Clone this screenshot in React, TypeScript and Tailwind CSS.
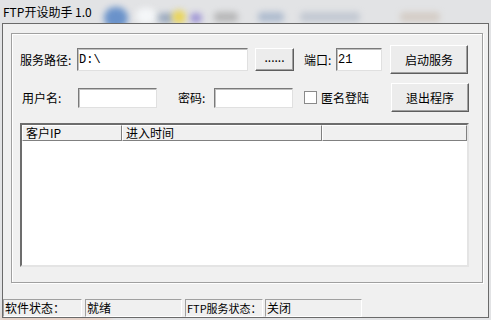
import React from 'react';

const font = { fontFamily: '"Noto Sans CJK SC", "Noto Sans", sans-serif' };

const Btn = ({ label, w, h, extra = '' }: { label: string; w: string; h: string; extra?: string }) => (
  <div
    className={`${w} ${h} flex items-center justify-center bg-[#ececec] border border-t-white border-l-white border-b-[#5e5e5e] border-r-[#5e5e5e] shadow-[inset_-1px_-1px_0_#a0a0a0] text-[12px] text-black ${extra}`}
  >
    {label}
  </div>
);

const Field = ({ w, h, value }: { w: string; h: string; value?: string }) => (
  <div
    className={`${w} ${h} bg-white border border-t-[#7a7a7a] border-l-[#7a7a7a] border-b-[#e0e0e0] border-r-[#e0e0e0] shadow-[inset_1px_1px_0_#c0c0c0] flex items-center pl-[1px] text-[12px] text-black`}
    style={{ fontFamily: '"Liberation Mono", "Noto Sans CJK SC", monospace' }}
  >
    {value}
  </div>
);

const Panel = ({ w, text, size = 'text-[12px]' }: { w: string; text: string; size?: string }) => (
  <div
    className={`${w} ${size} h-[18px] border border-t-[#a0a0a0] border-l-[#a0a0a0] border-b-white border-r-white flex items-center pl-[1px] text-black leading-none whitespace-nowrap`}
  >
    {text}
  </div>
);

const HeaderCell = ({ w, text }: { w: string; text: string }) => (
  <div
    className={`${w} h-[16px] bg-[#f0f0f0] border border-t-white border-l-white border-b-[#808080] border-r-[#808080] flex items-center pl-[3px] text-[12px] text-black leading-none`}
  >
    {text}
  </div>
);

export default function App() {
  return (
    <div className="w-[491px] h-[320px] relative overflow-hidden bg-[#e2e3e5] flex flex-col" style={font}>
      {/* blurred desktop behind the glass title bar */}
      <div className="absolute left-[104px] top-[7px] w-[24px] h-[22px] rounded-full bg-[#4d7fc4] blur-[3px] opacity-80" />
      <div className="absolute left-[136px] top-[8px] w-[20px] h-[16px] rounded-full bg-[#f4f6f8] blur-[3px]" />
      <div className="absolute left-[158px] top-[13px] w-[16px] h-[10px] rounded bg-[#8094b0] blur-[3px] opacity-70" />
      <div className="absolute left-[172px] top-[10px] w-[14px] h-[14px] rounded-full bg-[#e9d45a] blur-[3px]" />
      <div className="absolute left-[190px] top-[13px] w-[12px] h-[10px] rounded-full bg-[#8c7fd0] blur-[3px] opacity-80" />
      <div className="absolute left-[214px] top-[12px] w-[24px] h-[10px] rounded bg-[#9a9a9a] blur-[3px] opacity-60" />
      <div className="absolute left-[258px] top-[12px] w-[26px] h-[10px] rounded bg-[#8da2c0] blur-[3px] opacity-60" />
      <div className="absolute left-[300px] top-[12px] w-[60px] h-[10px] rounded bg-[#a4afc0] blur-[3px] opacity-50" />
      <div className="absolute left-[400px] top-[12px] w-[40px] h-[10px] rounded bg-[#c7b7a8] blur-[3px] opacity-50" />
      <div className="absolute left-[0px] top-[314px] w-[110px] h-[10px] bg-[#e6c6b4] blur-[3px] opacity-70" />

      {/* title */}
      <div className="relative h-[23px] pl-[3px] pt-[1px] flex items-center text-[12px] text-black leading-none">
        FTP开设助手 1.0
      </div>

      {/* client area */}
      <div className="relative mx-[2px] h-[295px] bg-[#f0f0f0] border border-[#6a6a6a] flex flex-col">
        {/* group box */}
        <div className="mt-[9px] ml-[8px] w-[472px] h-[250px] border border-[#a0a0a0] shadow-[inset_1px_1px_0_#fff,1px_1px_0_#fff] flex flex-col">
          {/* row 1 */}
          <div className="mt-[11px] h-[29px] pl-[8px] flex items-center">
            <div className="w-[57px] text-[12px] text-black">服务路径:</div>
            <Field w="w-[171px]" h="h-[23px]" value="D:\" />
            <div className="ml-[7px]">
              <Btn label="......" w="w-[39px]" h="h-[23px]" extra="pb-[6px]" />
            </div>
            <div className="ml-[10px] w-[32px] text-[12px] text-black">端口:</div>
            <Field w="w-[46px]" h="h-[23px]" value="21" />
            <div className="ml-[8px]">
              <Btn label="启动服务" w="w-[78px]" h="h-[29px]" />
            </div>
          </div>

          {/* row 2 */}
          <div className="mt-[9px] h-[29px] pl-[10px] flex items-center">
            <div className="w-[56px] text-[12px] text-black">用户名:</div>
            <Field w="w-[79px]" h="h-[20px]" />
            <div className="ml-[21px] w-[36px] text-[12px] text-black">密码:</div>
            <Field w="w-[79px]" h="h-[20px]" />
            <div className="ml-[11px] w-[13px] h-[13px] bg-white border border-[#8a8a8a]" />
            <div className="ml-[4px] w-[70px] text-[12px] text-black">匿名登陆</div>
            <Btn label="退出程序" w="w-[78px]" h="h-[29px]" />
          </div>

          {/* list view */}
          <div className="mt-[11px] ml-[8px] w-[449px] h-[144px] bg-white border-2 border-t-[#6d6d6d] border-l-[#6d6d6d] border-b-[#e4e4e4] border-r-[#e4e4e4] flex flex-col">
            <div className="flex">
              <HeaderCell w="w-[100px]" text="客户IP" />
              <HeaderCell w="w-[200px]" text="进入时间" />
              <HeaderCell w="flex-1" text="" />
            </div>
          </div>
        </div>

        {/* status bar */}
        <div className="mt-[16px] flex">
          <Panel w="w-[79px]" text="软件状态：" />
          <div className="ml-[3px]"><Panel w="w-[97px]" text="就绪" /></div>
          <div className="ml-[3px]"><Panel w="w-[78px]" text="FTP服务状态：" size="text-[11px]" /></div>
          <div className="ml-[2px]"><Panel w="w-[97px]" text="关闭" /></div>
        </div>
      </div>
    </div>
  );
}
